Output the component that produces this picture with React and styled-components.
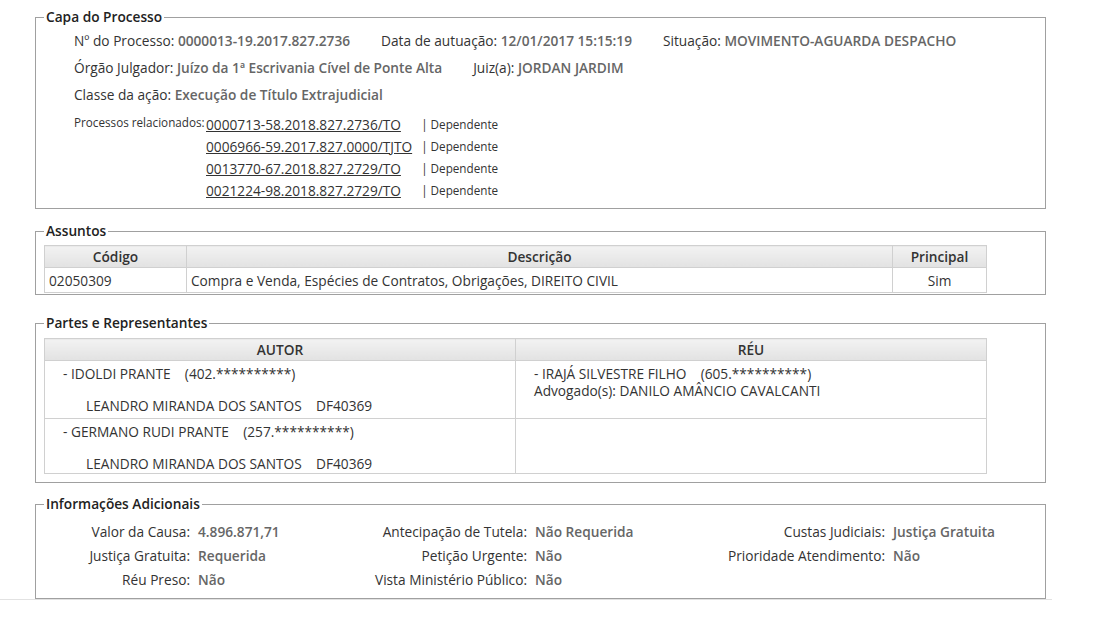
import React from "react";
import styled, { createGlobalStyle } from "styled-components";

const GlobalStyle = createGlobalStyle`
  body {
    margin: 0;
    background: #fff;
    font-family: "Open Sans", "Noto Sans", sans-serif;
    font-size: 13.7px;
    color: #333;
  }
`;

const processos = [
  "0000713-58.2018.827.2736/TO",
  "0006966-59.2017.827.0000/TJTO",
  "0013770-67.2018.827.2729/TO",
  "0021224-98.2018.827.2729/TO",
];

const autores = [
  { nome: "IDOLDI PRANTE", doc: "402.**********" },
  { nome: "GERMANO RUDI PRANTE", doc: "257.**********" },
];

const infos = [
  ["Valor da Causa:", "4.896.871,71", "Antecipação de Tutela:", "Não Requerida", "Custas Judiciais:", "Justiça Gratuita"],
  ["Justiça Gratuita:", "Requerida", "Petição Urgente:", "Não", "Prioridade Atendimento:", "Não"],
  ["Réu Preso:", "Não", "Vista Ministério Público:", "Não", "", ""],
];

export default function App() {
  return (
    <Page>
      <GlobalStyle />
      <Box $top={9} $pad="2px 0 7px 8px">
        <Legend>Capa do Processo</Legend>
        <CapaBody>
          <InfoLine>
            <Field>
              Nº do Processo: <Value>0000013-19.2017.827.2736</Value>
            </Field>
            <Field>
              Data de autuação: <Value>12/01/2017 15:15:19</Value>
            </Field>
            <Field>
              Situação: <Value>MOVIMENTO-AGUARDA DESPACHO</Value>
            </Field>
          </InfoLine>
          <InfoLine>
            <Field>
              Órgão Julgador: <Value>Juízo da 1ª Escrivania Cível de Ponte Alta</Value>
            </Field>
            <Field>
              Juiz(a): <Value>JORDAN JARDIM</Value>
            </Field>
          </InfoLine>
          <InfoLine>
            <Field>
              Classe da ação: <Value>Execução de Título Extrajudicial</Value>
            </Field>
          </InfoLine>
          <Related>
            <SmallLabel>Processos relacionados:</SmallLabel>
            {processos.map((p, i) => (
              <React.Fragment key={p}>
                {i > 0 && <span />}
                <ProcLink href="#">{p}</ProcLink>
                <Dep>| Dependente</Dep>
              </React.Fragment>
            ))}
          </Related>
        </CapaBody>
      </Box>

      <Box $top={14} $pad="6px 58px 1px 8px">
        <Legend>Assuntos</Legend>
        <Table>
          <colgroup>
            <col style={{ width: 142 }} />
            <col />
            <col style={{ width: 94 }} />
          </colgroup>
          <thead>
            <tr>
              <Th>Código</Th>
              <Th>Descrição</Th>
              <Th>Principal</Th>
            </tr>
          </thead>
          <tbody>
            <tr>
              <Td>02050309</Td>
              <Td>Compra e Venda, Espécies de Contratos, Obrigações, DIREITO CIVIL</Td>
              <Td $center>Sim</Td>
            </tr>
          </tbody>
        </Table>
      </Box>

      <Box $top={20} $pad="7px 58px 8px 8px">
        <Legend>Partes e Representantes</Legend>
        <Table>
          <colgroup>
            <col style={{ width: 471 }} />
            <col />
          </colgroup>
          <thead>
            <tr>
              <Th>AUTOR</Th>
              <Th>RÉU</Th>
            </tr>
          </thead>
          <tbody>
            {autores.map((a, i) => (
              <tr key={a.nome}>
                <PartyCell $h={i === 0 ? 53 : 50}>
                  <div>
                    - {a.nome}&nbsp;&nbsp;&nbsp; ({a.doc})
                  </div>
                  <Lawyer>LEANDRO MIRANDA DOS SANTOS&nbsp;&nbsp;&nbsp; DF40369</Lawyer>
                </PartyCell>
                <PartyCell $h={i === 0 ? 53 : 50}>
                  {i === 0 && (
                    <>
                      <div>- IRAJÁ SILVESTRE FILHO&nbsp;&nbsp;&nbsp; (605.**********)</div>
                      <div>Advogado(s): DANILO AMÂNCIO CAVALCANTI</div>
                    </>
                  )}
                </PartyCell>
              </tr>
            ))}
          </tbody>
        </Table>
      </Box>

      <Box $top={13} $pad="7px 0 7px 0">
        <Legend $offset={8}>Informações Adicionais</Legend>
        <InfoGrid>
          {infos.flat().map((t, i) =>
            i % 2 === 0 ? <InfoLabel key={i}>{t}</InfoLabel> : <Value key={i}>{t}</Value>
          )}
        </InfoGrid>
      </Box>
      <Divider />
    </Page>
  );
}

const Page = styled.div`
  padding: 0 0 0 35px;
  width: 1011px;
`;

const Box = styled.fieldset`
  margin: ${(p) => p.$top}px 0 0 0;
  padding: ${(p) => p.$pad};
  border: 1px solid #a0a0a0;
  min-width: 0;
`;

const Legend = styled.legend`
  padding: 0 2px;
  margin-left: ${(p) => p.$offset || 0}px;
  font-size: 13.7px;
  font-weight: 600;
  color: #222;
  line-height: 16px;
`;

const CapaBody = styled.div`
  padding-left: 30px;
`;

const InfoLine = styled.div`
  display: flex;
  gap: 31px;
  height: 27px;
  line-height: 27px;
  white-space: nowrap;
`;

const Field = styled.span`
  color: #333;
`;

const Value = styled.span`
  color: #666;
  font-weight: 600;
  white-space: nowrap;
`;

const Related = styled.div`
  display: grid;
  grid-template-columns: 132px auto 1fr;
  grid-auto-rows: 22px;
  align-items: center;
  margin-top: 5px;
`;

const SmallLabel = styled.span`
  font-size: 11.7px;
  align-self: start;
  margin-top: 1px;
  white-space: nowrap;
`;

const ProcLink = styled.a`
  color: #333;
  text-decoration: underline;
  white-space: nowrap;
`;

const Dep = styled.span`
  font-size: 11.7px;
  padding-left: 9px;
  color: #333;
`;

const Table = styled.table`
  width: 943px;
  border-collapse: collapse;
  table-layout: fixed;
`;

const Th = styled.th`
  height: 21px;
  padding: 0 4px;
  border: 1px solid #d0d0d0;
  background: linear-gradient(#f2f2f2, #e2e2e2);
  color: #333;
  font-weight: 600;
  text-align: center;
`;

const Td = styled.td`
  height: 24px;
  padding: 0 4px;
  border: 1px solid #d0d0d0;
  text-align: ${(p) => (p.$center ? "center" : "left")};
  color: #333;
`;

const PartyCell = styled.td`
  height: ${(p) => p.$h}px;
  padding: 4px 18px 0 18px;
  border: 1px solid #d0d0d0;
  vertical-align: top;
  line-height: 17px;
  color: #333;
`;

const Lawyer = styled.div`
  margin-top: 15px;
  padding-left: 23px;
`;

const InfoGrid = styled.div`
  display: grid;
  grid-template-columns: 154px 130px 191px 155px 187px auto;
  column-gap: 8px;
  grid-auto-rows: 24px;
  align-items: center;
  white-space: nowrap;
`;

const InfoLabel = styled.span`
  text-align: right;
  color: #333;
`;

const Divider = styled.div`
  width: 1052px;
  margin-left: -35px;
  height: 1px;
  background: #e2e2e2;
`;
